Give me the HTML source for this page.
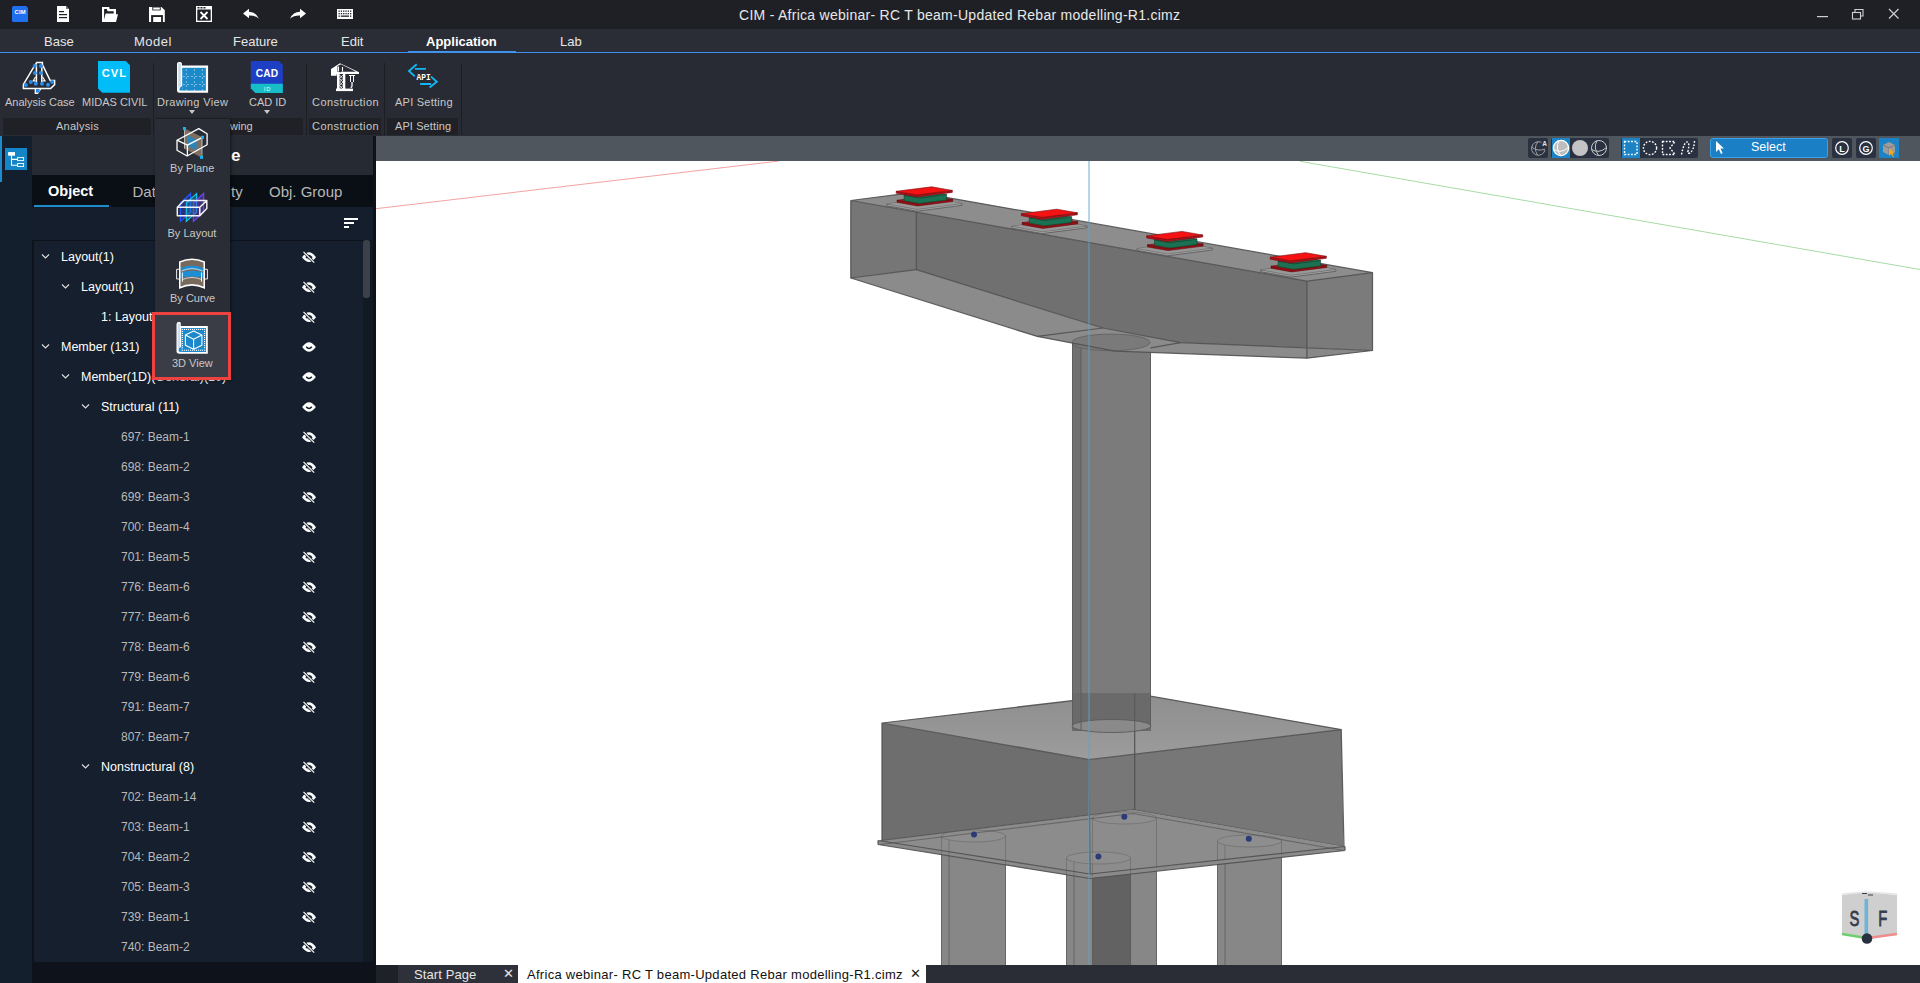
<!DOCTYPE html>
<html><head><meta charset="utf-8">
<style>
*{margin:0;padding:0;box-sizing:border-box}
html,body{width:1920px;height:983px;overflow:hidden;background:#1f2026;font-family:"Liberation Sans",sans-serif;color:#fff}
.a{position:absolute}
.t{position:absolute;white-space:nowrap;line-height:1}
#title{left:0;top:0;width:1920px;height:28px;background:#1f2026}
#menu{left:0;top:29px;width:1920px;height:23px;background:#2a2d35}
#menuline{left:0;top:52px;width:1920px;height:1px;background:#3f93ee}
#ribbon{left:0;top:53px;width:1920px;height:83px;background:#282b33}
.grp{position:absolute;top:65px;height:17px;background:#202228}
.rl{position:absolute;font-size:11.5px;color:#c9c9c9;white-space:nowrap;line-height:1;text-align:center}
#side{left:0;top:136px;width:32px;height:847px;background:#131f2d}
#panel{left:32px;top:136px;width:344px;height:847px;background:#0e131b}
#phead{left:32px;top:136px;width:341px;height:39px;background:#262a33}
#ptabs{left:32px;top:175px;width:341px;height:32px;background:#0a0e15}
#psort{left:32px;top:207px;width:341px;height:33px;background:#151e2c}
#plist{left:34px;top:241px;width:329px;height:721px;background:#151f2d}
.row{position:absolute;font-size:12.5px;line-height:1;white-space:nowrap}
#vp{left:376px;top:136px;width:1544px;height:829px;background:#fff}
#vtool{left:376px;top:136px;width:1544px;height:25px;background:#50565e}
#btabs{left:376px;top:965px;width:1544px;height:18px;background:#2a2d36}
</style></head><body>
<div id="title" class="a"></div>
<div id="menu" class="a"></div>
<div id="menuline" class="a"></div>
<div id="ribbon" class="a"></div>
<div id="side" class="a"></div>
<div id="panel" class="a"></div>
<div id="phead" class="a"></div>
<div id="ptabs" class="a"></div>
<div id="psort" class="a"></div>
<div id="plist" class="a"></div>
<div id="vp" class="a"></div>
<div id="vtool" class="a"></div>
<div id="btabs" class="a"></div>

<!-- title bar icons -->
<svg class="a" style="left:0;top:0" width="400" height="28" viewBox="0 0 400 28">
 <path d="M12 7.5 Q12 6 13.5 6 H26 L28 8 V22 H13.5 Q12 22 12 20.5Z" fill="#1f6fee"/>
 <text x="20.2" y="14" font-size="5.8" font-weight="700" fill="#fff" text-anchor="middle" font-family="Liberation Sans" letter-spacing="0.2">CIM</text>
 <path d="M57 6 H66 L69 9 V22 H57Z" fill="#fff"/>
 <path d="M66 6 V9 H69" fill="#1f2026" opacity="0.6"/>
 <rect x="59" y="11" width="5" height="1.2" fill="#1f2026"/><rect x="59" y="14" width="8" height="1.2" fill="#1f2026"/><rect x="59" y="17" width="8" height="1.2" fill="#1f2026"/>
 <path d="M102 7 H109.2 L109.6 9.1 H116 V14.3 H118 L116 22 H102 Z" fill="#fff"/>
 <path d="M104.1 9.1 H106.8 L107.6 11.2 H113.7 V13.6 H105.6 L104.1 19.7 Z" fill="#1f2026"/>
 <path d="M149 7 H161.5 L164.8 10.2 V22 H149 Z" fill="#fff"/>
 <rect x="152.3" y="7" width="8.4" height="3.4" fill="#1f2026"/><rect x="153.2" y="7.5" width="6.6" height="2.1" fill="#fff"/>
 <rect x="151.1" y="15.1" width="11.8" height="6.9" fill="#1f2026"/><rect x="153.2" y="17" width="7.9" height="5" fill="#fff"/>
 <rect x="196" y="6" width="16" height="16" fill="#fff"/>
 <rect x="197.3" y="9.5" width="13.4" height="11.2" fill="#1f2026"/>
 <rect x="197.5" y="7" width="2" height="1.5" fill="#1f2026"/><rect x="200.5" y="7" width="2" height="1.5" fill="#1f2026"/><rect x="203.5" y="7" width="2" height="1.5" fill="#1f2026"/>
 <path d="M200.5 12 L207.5 19 M207.5 12 L200.5 19" stroke="#fff" stroke-width="1.8"/>
 <path d="M243 13.5 L249 8.8 V11.8 Q256 11.8 259 18.8 Q255 15.2 249 15.5 V18.2Z" fill="#fff"/>
 <path d="M306 13.5 L300 8.8 V11.8 Q293 11.8 290 18.8 Q294 15.2 300 15.5 V18.2Z" fill="#fff"/>
 <rect x="337" y="9" width="16" height="10" fill="#fff"/>
 <g fill="#1f2026">
  <rect x="338.5" y="10.5" width="1.3" height="1.3"/><rect x="340.8" y="10.5" width="1.3" height="1.3"/><rect x="343.1" y="10.5" width="1.3" height="1.3"/><rect x="345.4" y="10.5" width="1.3" height="1.3"/><rect x="347.7" y="10.5" width="1.3" height="1.3"/><rect x="350" y="10.5" width="1.3" height="1.3"/>
  <rect x="338.5" y="13" width="1.3" height="1.3"/><rect x="340.8" y="13" width="1.3" height="1.3"/><rect x="343.1" y="13" width="1.3" height="1.3"/><rect x="345.4" y="13" width="1.3" height="1.3"/><rect x="347.7" y="13" width="1.3" height="1.3"/><rect x="350" y="13" width="1.3" height="1.3"/>
  <rect x="338.5" y="15.5" width="1.3" height="1.3"/><rect x="340.8" y="15.5" width="8.2" height="1.3"/><rect x="350" y="15.5" width="1.3" height="1.3"/>
 </g>
</svg>
<div class="t" style="left:739px;top:8px;font-size:14px;letter-spacing:0.27px;color:#e8e8e8">CIM - Africa webinar- RC T beam-Updated Rebar modelling-R1.cimz</div>
<svg class="a" style="left:1800px;top:0" width="120" height="28" viewBox="1800 0 120 28">
 <rect x="1817" y="16" width="11" height="1.2" fill="#cfcfcf"/>
 <rect x="1852.5" y="12.5" width="8" height="6.5" fill="none" stroke="#cfcfcf" stroke-width="1.1"/>
 <path d="M1855 12.5 V9.5 H1863 V16 H1860.5" fill="none" stroke="#cfcfcf" stroke-width="1.1"/>
 <path d="M1889 9 L1898.5 18.5 M1898.5 9 L1889 18.5" stroke="#cfcfcf" stroke-width="1.2"/>
</svg>

<!-- ribbon -->
<div class="a" style="left:153px;top:63px;width:1px;height:72px;background:#1c1e23"></div>
<div class="a" style="left:306px;top:63px;width:1px;height:72px;background:#1c1e23"></div>
<div class="a" style="left:384px;top:63px;width:1px;height:72px;background:#1c1e23"></div>
<div class="a" style="left:461px;top:63px;width:1px;height:72px;background:#1c1e23"></div>
<div class="a" style="left:3px;top:118px;width:148px;height:16.5px;background:#1f2126"></div>
<div class="a" style="left:155px;top:118px;width:148px;height:16.5px;background:#1f2126"></div>
<div class="a" style="left:309px;top:118px;width:72px;height:16.5px;background:#1f2126"></div>
<div class="a" style="left:387px;top:118px;width:71px;height:16.5px;background:#1f2126"></div>
<div class="t" style="left:5px;top:97px;font-size:11px;color:#c8c8c8">Analysis Case</div>
<div class="t" style="left:82px;top:97px;font-size:11px;color:#c8c8c8">MIDAS CIVIL</div>
<div class="t" style="left:157px;top:97px;font-size:11px;letter-spacing:0.35px;color:#c8c8c8">Drawing View</div>
<div class="t" style="left:249px;top:97px;font-size:11px;color:#c8c8c8">CAD ID</div>
<div class="t" style="left:312px;top:97px;font-size:11px;letter-spacing:0.45px;color:#c8c8c8">Construction</div>
<div class="t" style="left:395px;top:97px;font-size:11px;letter-spacing:0.25px;color:#c8c8c8">API Setting</div>
<div class="t" style="left:56px;top:120.7px;font-size:11px;letter-spacing:0.25px;color:#c8c8c8">Analysis</div>
<div class="t" style="left:230px;top:120.7px;font-size:11px;color:#c8c8c8">wing</div>
<div class="t" style="left:312px;top:120.7px;font-size:11px;letter-spacing:0.45px;color:#c8c8c8">Construction</div>
<div class="t" style="left:395px;top:120.7px;font-size:11px;letter-spacing:0.1px;color:#c8c8c8">API Setting</div>
<svg class="a" style="left:0;top:53px" width="470" height="65" viewBox="0 53 470 65">
 <!-- analysis case -->
 <g fill="none" stroke="#fff" stroke-width="1.5" stroke-linejoin="miter">
  <path d="M36.8 62.6 H42.4 V64.5 L50.2 80.6 H54.6 V84.6 L50.6 88.6 H23.4 V84.4 L35.2 64.6 Z"/>
  <path d="M36.4 64.5 V84.5 M41.8 64.5 V84.5"/>
  <path d="M35.5 77 L33.2 80.8 H35.5 M42.6 77 L45 80.8 H42.6" stroke-width="1.2"/>
  <path d="M35.4 88.8 V93.2 H37.6 L40.6 88.8"/>
 </g>
 <g fill="#2b8de8">
  <circle cx="34.7" cy="66" r="2"/><circle cx="40.9" cy="66" r="2"/><circle cx="34.9" cy="72.9" r="2"/><circle cx="40.9" cy="72.9" r="2"/>
  <circle cx="30.8" cy="82" r="2"/><circle cx="25.8" cy="85" r="2"/><circle cx="35.8" cy="83.8" r="2"/><circle cx="42" cy="83.8" r="2"/><circle cx="48" cy="84.8" r="2"/><circle cx="52.1" cy="82" r="2"/>
  <circle cx="37.9" cy="90.7" r="2"/>
 </g>
 <!-- CVL -->
 <path d="M98 61 H125.7 L130 65.3 V92.8 H102.3 L98 88.5Z" fill="#00bdf7"/>
 <text x="114.4" y="76.8" font-size="11.2" font-weight="700" fill="#fff" text-anchor="middle" font-family="Liberation Sans" letter-spacing="0.9">CVL</text>
 <!-- drawing view -->
 <path d="M179 62 Q177 62 177 64 V90.5 Q177 92.8 179.5 92.8 H208.1 V65.6 H181.9 V63.5 Q181.9 62 180 62Z" fill="#fff"/>
 <rect x="182.2" y="67.8" width="23.7" height="22.8" fill="#1b8acb"/>
 <path d="M178.2 63.5 H180.8 V85.5 Q179.5 87 178.2 88Z" fill="#cfdbe8"/>
 <path d="M182.2 86 Q179 87 179.5 90.6 H182.2Z" fill="#1b8acb"/>
 <g fill="#fff"><circle cx="186.3" cy="70.0" r="0.6"/><circle cx="186.3" cy="74.0" r="0.6"/><circle cx="186.3" cy="78.0" r="0.6"/><circle cx="186.3" cy="82.0" r="0.6"/><circle cx="186.3" cy="86.0" r="0.6"/><circle cx="186.3" cy="90.0" r="0.6"/><circle cx="194.4" cy="70.0" r="0.6"/><circle cx="194.4" cy="74.0" r="0.6"/><circle cx="194.4" cy="78.0" r="0.6"/><circle cx="194.4" cy="82.0" r="0.6"/><circle cx="194.4" cy="86.0" r="0.6"/><circle cx="194.4" cy="90.0" r="0.6"/><circle cx="202.4" cy="70.0" r="0.6"/><circle cx="202.4" cy="74.0" r="0.6"/><circle cx="202.4" cy="78.0" r="0.6"/><circle cx="202.4" cy="82.0" r="0.6"/><circle cx="202.4" cy="86.0" r="0.6"/><circle cx="202.4" cy="90.0" r="0.6"/><circle cx="184.0" cy="76.5" r="0.6"/><circle cx="188.0" cy="76.5" r="0.6"/><circle cx="192.0" cy="76.5" r="0.6"/><circle cx="196.0" cy="76.5" r="0.6"/><circle cx="200.0" cy="76.5" r="0.6"/><circle cx="204.0" cy="76.5" r="0.6"/><circle cx="184.0" cy="84.5" r="0.6"/><circle cx="188.0" cy="84.5" r="0.6"/><circle cx="192.0" cy="84.5" r="0.6"/><circle cx="196.0" cy="84.5" r="0.6"/><circle cx="200.0" cy="84.5" r="0.6"/><circle cx="204.0" cy="84.5" r="0.6"/></g>
 <path d="M189 110 H195 L192 114Z" fill="#c8c8c8"/>
 <!-- CAD ID -->
 <path d="M250.8 61.1 H279 L282.8 65.3 V93.1 H255.3 L250.8 88.3Z" fill="#1d3fc4"/>
 <path d="M250.8 83.8 H282.8 V93.1 H255.3 L250.8 88.3Z" fill="#16bec8"/>
 <text x="267" y="76.6" font-size="10.2" font-weight="700" fill="#fff" text-anchor="middle" font-family="Liberation Sans" letter-spacing="0.2">CAD</text>
 <text x="267.6" y="90.7" font-size="5.8" fill="#e6f7f8" text-anchor="middle" font-family="Liberation Sans" letter-spacing="1">ID</text>
 <path d="M264 110 H270 L267 114Z" fill="#c8c8c8"/>
 <!-- construction crane -->
 <path d="M331 69 L340 63.2 L359 72.2 V74 H336.7 V75.8 H331Z" fill="#fff"/>
 <path d="M337.5 66 L341 64.2 L356 71.8 H341 V72.2 H337.5Z" fill="#282b33"/>
 <path d="M338.5 66.5 V71.5 M342.5 67 V71.5" stroke="#fff" stroke-width="1.1"/>
 <rect x="337" y="72" width="2.6" height="17.5" fill="#fff"/>
 <rect x="343" y="72" width="2.3" height="17.5" fill="#fff"/>
 <path d="M339.6 75 L343 78.5 L339.6 82 L343 85.5 L339.6 89 M343 75 L339.6 78.5 L343 82 L339.6 85.5 L343 89" stroke="#fff" stroke-width="0.8" fill="none"/>
 <rect x="336" y="88.6" width="17" height="2.5" fill="#fff"/>
 <path d="M349 75.5 H355 M350.5 75.5 V82 M353.5 75.5 V82" stroke="#fff" stroke-width="1" fill="none"/>
 <path d="M352 82 V85.8 Q352 87.8 350.6 87" stroke="#fff" stroke-width="1.3" fill="none"/>
 <!-- API -->
 <g stroke="#12b6f4" stroke-width="1.9" fill="none" stroke-linejoin="miter" stroke-linecap="butt">
  <path d="M416.7 64.3 L409 71 L414.8 76.4 M415 68.9 H426"/>
  <path d="M431 76.6 L436.8 81.8 L429.6 87.6 M420.1 84 H431"/>
 </g>
 <text x="423.6" y="80" font-size="9.2" fill="#fff" text-anchor="middle" font-family="Liberation Mono" font-weight="700" transform="translate(423.6 80) scale(0.85 1) translate(-423.6 -80)">API</text>
 </svg>


<!-- panel -->
<div class="a" style="left:0;top:136px;width:2px;height:46px;background:#1e8ccc"></div>
<div class="a" style="left:5px;top:148px;width:22px;height:22px;background:#1486c8"></div>
<svg class="a" style="left:5px;top:148px" width="22" height="22" viewBox="0 0 22 22">
 <rect x="3.1" y="4.1" width="6.9" height="3.6" fill="#fff"/>
 <path d="M6.5 7.5 V17.3 H12.6 M6.5 11.4 H12.6" stroke="#fff" stroke-width="1.1" fill="none"/>
 <rect x="12.6" y="9.6" width="6" height="3" fill="none" stroke="#fff" stroke-width="0.9"/>
 <rect x="12.6" y="15.5" width="6" height="3" fill="none" stroke="#fff" stroke-width="0.9"/>
</svg>
<div class="t" style="left:231px;top:147px;font-size:17px;font-weight:700;color:#fff">e</div>
<div class="t" style="left:48px;top:184px;font-size:14.5px;font-weight:700;color:#fff">Object</div>
<div class="a" style="left:34px;top:205px;width:75px;height:2px;background:#1e8ccc"></div>
<div class="t" style="left:132.5px;top:184px;font-size:15px;color:#b8b8b8">Dat</div>
<div class="t" style="left:231px;top:184px;font-size:15px;color:#b8b8b8">ty</div>
<div class="t" style="left:269px;top:184px;font-size:15px;color:#b8b8b8">Obj. Group</div>
<div class="a" style="left:344px;top:218px;width:14px;height:2px;background:#fff"></div>
<div class="a" style="left:344px;top:222px;width:10px;height:2px;background:#fff"></div>
<div class="a" style="left:344px;top:226px;width:5px;height:2px;background:#fff"></div>
<div class="a" style="left:363px;top:240px;width:10px;height:722px;background:#111923"></div>
<div class="a" style="left:363px;top:240px;width:7px;height:58px;background:#3c4149;border-radius:3px"></div>
<div class="t" style="left:61px;top:251px;font-size:12.5px;color:#fff">Layout(1)</div>
<div class="t" style="left:81px;top:281px;font-size:12.5px;color:#fff">Layout(1)</div>
<div class="t" style="left:101px;top:311px;font-size:12.5px;color:#fff">1: Layout</div>
<div class="t" style="left:61px;top:341px;font-size:12.5px;color:#fff">Member (131)</div>
<div class="t" style="left:81px;top:371px;font-size:12.5px;color:#fff">Member(1D)(General)(10)</div>
<div class="t" style="left:101px;top:401px;font-size:12.5px;color:#fff">Structural (11)</div>
<div class="t" style="left:121px;top:431px;font-size:12px;color:#b9b9b9">697: Beam-1</div>
<div class="t" style="left:121px;top:461px;font-size:12px;color:#b9b9b9">698: Beam-2</div>
<div class="t" style="left:121px;top:491px;font-size:12px;color:#b9b9b9">699: Beam-3</div>
<div class="t" style="left:121px;top:521px;font-size:12px;color:#b9b9b9">700: Beam-4</div>
<div class="t" style="left:121px;top:551px;font-size:12px;color:#b9b9b9">701: Beam-5</div>
<div class="t" style="left:121px;top:581px;font-size:12px;color:#b9b9b9">776: Beam-6</div>
<div class="t" style="left:121px;top:611px;font-size:12px;color:#b9b9b9">777: Beam-6</div>
<div class="t" style="left:121px;top:641px;font-size:12px;color:#b9b9b9">778: Beam-6</div>
<div class="t" style="left:121px;top:671px;font-size:12px;color:#b9b9b9">779: Beam-6</div>
<div class="t" style="left:121px;top:701px;font-size:12px;color:#b9b9b9">791: Beam-7</div>
<div class="t" style="left:121px;top:731px;font-size:12px;color:#b9b9b9">807: Beam-7</div>
<div class="t" style="left:101px;top:761px;font-size:12.5px;color:#fff">Nonstructural (8)</div>
<div class="t" style="left:121px;top:791px;font-size:12px;color:#b9b9b9">702: Beam-14</div>
<div class="t" style="left:121px;top:821px;font-size:12px;color:#b9b9b9">703: Beam-1</div>
<div class="t" style="left:121px;top:851px;font-size:12px;color:#b9b9b9">704: Beam-2</div>
<div class="t" style="left:121px;top:881px;font-size:12px;color:#b9b9b9">705: Beam-3</div>
<div class="t" style="left:121px;top:911px;font-size:12px;color:#b9b9b9">739: Beam-1</div>
<div class="t" style="left:121px;top:941px;font-size:12px;color:#b9b9b9">740: Beam-2</div>
<svg class="a" style="left:0;top:0" width="376" height="983" viewBox="0 0 376 983">
<defs>
 <g id="eyev"><path d="M-6.8 0 Q0 -9.5 6.8 0 Q0 9.5 -6.8 0Z" fill="#fff"/><path d="M-2.8 -0.3 Q0 3.2 2.8 -0.3" stroke="#151f2d" stroke-width="1.4" fill="none"/></g>
 <g id="eyeh"><path d="M-7 0.3 Q0 -9.8 7 0.3 Q0 9.8 -7 0.3Z" fill="#fff"/><path d="M-3.6 0.2 Q0 -4.8 3.6 0.2 Q0 4.8 -3.6 0.2Z" fill="#151f2d"/><path d="M-1.8 1 Q0 3 1.8 1" stroke="#fff" stroke-width="1" fill="none"/><path d="M-5.5 -5.2 L5.2 5.6" stroke="#151f2d" stroke-width="2.6"/><path d="M-5.5 -5.2 L5.2 5.6" stroke="#fff" stroke-width="1.2"/></g>
</defs>
<path d="M42.0 254.5 L45.5 258 L49.0 254.5" stroke="#e0e0e0" stroke-width="1.1" fill="none"/>
<g transform="translate(309 257)"><path d="M-7 0.3 Q0 -9.8 7 0.3 Q0 9.8 -7 0.3Z" fill="#fff"/><path d="M-3.6 0.2 Q0 -4.8 3.6 0.2 Q0 4.8 -3.6 0.2Z" fill="#151f2d"/><path d="M-1.8 1 Q0 3 1.8 1" stroke="#fff" stroke-width="1" fill="none"/><path d="M-5.5 -5.2 L5.2 5.6" stroke="#151f2d" stroke-width="2.6"/><path d="M-5.5 -5.2 L5.2 5.6" stroke="#fff" stroke-width="1.2"/></g>
<path d="M62.0 284.5 L65.5 288 L69.0 284.5" stroke="#e0e0e0" stroke-width="1.1" fill="none"/>
<g transform="translate(309 287)"><path d="M-7 0.3 Q0 -9.8 7 0.3 Q0 9.8 -7 0.3Z" fill="#fff"/><path d="M-3.6 0.2 Q0 -4.8 3.6 0.2 Q0 4.8 -3.6 0.2Z" fill="#151f2d"/><path d="M-1.8 1 Q0 3 1.8 1" stroke="#fff" stroke-width="1" fill="none"/><path d="M-5.5 -5.2 L5.2 5.6" stroke="#151f2d" stroke-width="2.6"/><path d="M-5.5 -5.2 L5.2 5.6" stroke="#fff" stroke-width="1.2"/></g>
<g transform="translate(309 317)"><path d="M-7 0.3 Q0 -9.8 7 0.3 Q0 9.8 -7 0.3Z" fill="#fff"/><path d="M-3.6 0.2 Q0 -4.8 3.6 0.2 Q0 4.8 -3.6 0.2Z" fill="#151f2d"/><path d="M-1.8 1 Q0 3 1.8 1" stroke="#fff" stroke-width="1" fill="none"/><path d="M-5.5 -5.2 L5.2 5.6" stroke="#151f2d" stroke-width="2.6"/><path d="M-5.5 -5.2 L5.2 5.6" stroke="#fff" stroke-width="1.2"/></g>
<path d="M42.0 344.5 L45.5 348 L49.0 344.5" stroke="#e0e0e0" stroke-width="1.1" fill="none"/>
<g transform="translate(309 347)"><path d="M-6.8 0 Q0 -9.5 6.8 0 Q0 9.5 -6.8 0Z" fill="#fff"/><path d="M-2.8 -0.3 Q0 3.2 2.8 -0.3" stroke="#151f2d" stroke-width="1.4" fill="none"/></g>
<path d="M62.0 374.5 L65.5 378 L69.0 374.5" stroke="#e0e0e0" stroke-width="1.1" fill="none"/>
<g transform="translate(309 377)"><path d="M-6.8 0 Q0 -9.5 6.8 0 Q0 9.5 -6.8 0Z" fill="#fff"/><path d="M-2.8 -0.3 Q0 3.2 2.8 -0.3" stroke="#151f2d" stroke-width="1.4" fill="none"/></g>
<path d="M82.0 404.5 L85.5 408 L89.0 404.5" stroke="#e0e0e0" stroke-width="1.1" fill="none"/>
<g transform="translate(309 407)"><path d="M-6.8 0 Q0 -9.5 6.8 0 Q0 9.5 -6.8 0Z" fill="#fff"/><path d="M-2.8 -0.3 Q0 3.2 2.8 -0.3" stroke="#151f2d" stroke-width="1.4" fill="none"/></g>
<g transform="translate(309 437)"><path d="M-7 0.3 Q0 -9.8 7 0.3 Q0 9.8 -7 0.3Z" fill="#fff"/><path d="M-3.6 0.2 Q0 -4.8 3.6 0.2 Q0 4.8 -3.6 0.2Z" fill="#151f2d"/><path d="M-1.8 1 Q0 3 1.8 1" stroke="#fff" stroke-width="1" fill="none"/><path d="M-5.5 -5.2 L5.2 5.6" stroke="#151f2d" stroke-width="2.6"/><path d="M-5.5 -5.2 L5.2 5.6" stroke="#fff" stroke-width="1.2"/></g>
<g transform="translate(309 467)"><path d="M-7 0.3 Q0 -9.8 7 0.3 Q0 9.8 -7 0.3Z" fill="#fff"/><path d="M-3.6 0.2 Q0 -4.8 3.6 0.2 Q0 4.8 -3.6 0.2Z" fill="#151f2d"/><path d="M-1.8 1 Q0 3 1.8 1" stroke="#fff" stroke-width="1" fill="none"/><path d="M-5.5 -5.2 L5.2 5.6" stroke="#151f2d" stroke-width="2.6"/><path d="M-5.5 -5.2 L5.2 5.6" stroke="#fff" stroke-width="1.2"/></g>
<g transform="translate(309 497)"><path d="M-7 0.3 Q0 -9.8 7 0.3 Q0 9.8 -7 0.3Z" fill="#fff"/><path d="M-3.6 0.2 Q0 -4.8 3.6 0.2 Q0 4.8 -3.6 0.2Z" fill="#151f2d"/><path d="M-1.8 1 Q0 3 1.8 1" stroke="#fff" stroke-width="1" fill="none"/><path d="M-5.5 -5.2 L5.2 5.6" stroke="#151f2d" stroke-width="2.6"/><path d="M-5.5 -5.2 L5.2 5.6" stroke="#fff" stroke-width="1.2"/></g>
<g transform="translate(309 527)"><path d="M-7 0.3 Q0 -9.8 7 0.3 Q0 9.8 -7 0.3Z" fill="#fff"/><path d="M-3.6 0.2 Q0 -4.8 3.6 0.2 Q0 4.8 -3.6 0.2Z" fill="#151f2d"/><path d="M-1.8 1 Q0 3 1.8 1" stroke="#fff" stroke-width="1" fill="none"/><path d="M-5.5 -5.2 L5.2 5.6" stroke="#151f2d" stroke-width="2.6"/><path d="M-5.5 -5.2 L5.2 5.6" stroke="#fff" stroke-width="1.2"/></g>
<g transform="translate(309 557)"><path d="M-7 0.3 Q0 -9.8 7 0.3 Q0 9.8 -7 0.3Z" fill="#fff"/><path d="M-3.6 0.2 Q0 -4.8 3.6 0.2 Q0 4.8 -3.6 0.2Z" fill="#151f2d"/><path d="M-1.8 1 Q0 3 1.8 1" stroke="#fff" stroke-width="1" fill="none"/><path d="M-5.5 -5.2 L5.2 5.6" stroke="#151f2d" stroke-width="2.6"/><path d="M-5.5 -5.2 L5.2 5.6" stroke="#fff" stroke-width="1.2"/></g>
<g transform="translate(309 587)"><path d="M-7 0.3 Q0 -9.8 7 0.3 Q0 9.8 -7 0.3Z" fill="#fff"/><path d="M-3.6 0.2 Q0 -4.8 3.6 0.2 Q0 4.8 -3.6 0.2Z" fill="#151f2d"/><path d="M-1.8 1 Q0 3 1.8 1" stroke="#fff" stroke-width="1" fill="none"/><path d="M-5.5 -5.2 L5.2 5.6" stroke="#151f2d" stroke-width="2.6"/><path d="M-5.5 -5.2 L5.2 5.6" stroke="#fff" stroke-width="1.2"/></g>
<g transform="translate(309 617)"><path d="M-7 0.3 Q0 -9.8 7 0.3 Q0 9.8 -7 0.3Z" fill="#fff"/><path d="M-3.6 0.2 Q0 -4.8 3.6 0.2 Q0 4.8 -3.6 0.2Z" fill="#151f2d"/><path d="M-1.8 1 Q0 3 1.8 1" stroke="#fff" stroke-width="1" fill="none"/><path d="M-5.5 -5.2 L5.2 5.6" stroke="#151f2d" stroke-width="2.6"/><path d="M-5.5 -5.2 L5.2 5.6" stroke="#fff" stroke-width="1.2"/></g>
<g transform="translate(309 647)"><path d="M-7 0.3 Q0 -9.8 7 0.3 Q0 9.8 -7 0.3Z" fill="#fff"/><path d="M-3.6 0.2 Q0 -4.8 3.6 0.2 Q0 4.8 -3.6 0.2Z" fill="#151f2d"/><path d="M-1.8 1 Q0 3 1.8 1" stroke="#fff" stroke-width="1" fill="none"/><path d="M-5.5 -5.2 L5.2 5.6" stroke="#151f2d" stroke-width="2.6"/><path d="M-5.5 -5.2 L5.2 5.6" stroke="#fff" stroke-width="1.2"/></g>
<g transform="translate(309 677)"><path d="M-7 0.3 Q0 -9.8 7 0.3 Q0 9.8 -7 0.3Z" fill="#fff"/><path d="M-3.6 0.2 Q0 -4.8 3.6 0.2 Q0 4.8 -3.6 0.2Z" fill="#151f2d"/><path d="M-1.8 1 Q0 3 1.8 1" stroke="#fff" stroke-width="1" fill="none"/><path d="M-5.5 -5.2 L5.2 5.6" stroke="#151f2d" stroke-width="2.6"/><path d="M-5.5 -5.2 L5.2 5.6" stroke="#fff" stroke-width="1.2"/></g>
<g transform="translate(309 707)"><path d="M-7 0.3 Q0 -9.8 7 0.3 Q0 9.8 -7 0.3Z" fill="#fff"/><path d="M-3.6 0.2 Q0 -4.8 3.6 0.2 Q0 4.8 -3.6 0.2Z" fill="#151f2d"/><path d="M-1.8 1 Q0 3 1.8 1" stroke="#fff" stroke-width="1" fill="none"/><path d="M-5.5 -5.2 L5.2 5.6" stroke="#151f2d" stroke-width="2.6"/><path d="M-5.5 -5.2 L5.2 5.6" stroke="#fff" stroke-width="1.2"/></g>
<path d="M82.0 764.5 L85.5 768 L89.0 764.5" stroke="#e0e0e0" stroke-width="1.1" fill="none"/>
<g transform="translate(309 767)"><path d="M-7 0.3 Q0 -9.8 7 0.3 Q0 9.8 -7 0.3Z" fill="#fff"/><path d="M-3.6 0.2 Q0 -4.8 3.6 0.2 Q0 4.8 -3.6 0.2Z" fill="#151f2d"/><path d="M-1.8 1 Q0 3 1.8 1" stroke="#fff" stroke-width="1" fill="none"/><path d="M-5.5 -5.2 L5.2 5.6" stroke="#151f2d" stroke-width="2.6"/><path d="M-5.5 -5.2 L5.2 5.6" stroke="#fff" stroke-width="1.2"/></g>
<g transform="translate(309 797)"><path d="M-7 0.3 Q0 -9.8 7 0.3 Q0 9.8 -7 0.3Z" fill="#fff"/><path d="M-3.6 0.2 Q0 -4.8 3.6 0.2 Q0 4.8 -3.6 0.2Z" fill="#151f2d"/><path d="M-1.8 1 Q0 3 1.8 1" stroke="#fff" stroke-width="1" fill="none"/><path d="M-5.5 -5.2 L5.2 5.6" stroke="#151f2d" stroke-width="2.6"/><path d="M-5.5 -5.2 L5.2 5.6" stroke="#fff" stroke-width="1.2"/></g>
<g transform="translate(309 827)"><path d="M-7 0.3 Q0 -9.8 7 0.3 Q0 9.8 -7 0.3Z" fill="#fff"/><path d="M-3.6 0.2 Q0 -4.8 3.6 0.2 Q0 4.8 -3.6 0.2Z" fill="#151f2d"/><path d="M-1.8 1 Q0 3 1.8 1" stroke="#fff" stroke-width="1" fill="none"/><path d="M-5.5 -5.2 L5.2 5.6" stroke="#151f2d" stroke-width="2.6"/><path d="M-5.5 -5.2 L5.2 5.6" stroke="#fff" stroke-width="1.2"/></g>
<g transform="translate(309 857)"><path d="M-7 0.3 Q0 -9.8 7 0.3 Q0 9.8 -7 0.3Z" fill="#fff"/><path d="M-3.6 0.2 Q0 -4.8 3.6 0.2 Q0 4.8 -3.6 0.2Z" fill="#151f2d"/><path d="M-1.8 1 Q0 3 1.8 1" stroke="#fff" stroke-width="1" fill="none"/><path d="M-5.5 -5.2 L5.2 5.6" stroke="#151f2d" stroke-width="2.6"/><path d="M-5.5 -5.2 L5.2 5.6" stroke="#fff" stroke-width="1.2"/></g>
<g transform="translate(309 887)"><path d="M-7 0.3 Q0 -9.8 7 0.3 Q0 9.8 -7 0.3Z" fill="#fff"/><path d="M-3.6 0.2 Q0 -4.8 3.6 0.2 Q0 4.8 -3.6 0.2Z" fill="#151f2d"/><path d="M-1.8 1 Q0 3 1.8 1" stroke="#fff" stroke-width="1" fill="none"/><path d="M-5.5 -5.2 L5.2 5.6" stroke="#151f2d" stroke-width="2.6"/><path d="M-5.5 -5.2 L5.2 5.6" stroke="#fff" stroke-width="1.2"/></g>
<g transform="translate(309 917)"><path d="M-7 0.3 Q0 -9.8 7 0.3 Q0 9.8 -7 0.3Z" fill="#fff"/><path d="M-3.6 0.2 Q0 -4.8 3.6 0.2 Q0 4.8 -3.6 0.2Z" fill="#151f2d"/><path d="M-1.8 1 Q0 3 1.8 1" stroke="#fff" stroke-width="1" fill="none"/><path d="M-5.5 -5.2 L5.2 5.6" stroke="#151f2d" stroke-width="2.6"/><path d="M-5.5 -5.2 L5.2 5.6" stroke="#fff" stroke-width="1.2"/></g>
<g transform="translate(309 947)"><path d="M-7 0.3 Q0 -9.8 7 0.3 Q0 9.8 -7 0.3Z" fill="#fff"/><path d="M-3.6 0.2 Q0 -4.8 3.6 0.2 Q0 4.8 -3.6 0.2Z" fill="#151f2d"/><path d="M-1.8 1 Q0 3 1.8 1" stroke="#fff" stroke-width="1" fill="none"/><path d="M-5.5 -5.2 L5.2 5.6" stroke="#151f2d" stroke-width="2.6"/><path d="M-5.5 -5.2 L5.2 5.6" stroke="#fff" stroke-width="1.2"/></g></svg>

<!-- dropdown -->
<div class="a" style="left:155px;top:119px;width:75px;height:260px;background:#2a2d36;box-shadow:1px 1px 3px rgba(0,0,0,0.5)"></div>
<div class="a" style="left:152px;top:312px;width:79px;height:68px;background:#3a3d46;border:3px solid #ee4240"></div>
<div class="t" style="left:170px;top:163px;font-size:11px;letter-spacing:0.05px;color:#c8c8c8">By Plane</div>
<div class="t" style="left:167.5px;top:228px;font-size:11px;color:#c8c8c8">By Layout</div>
<div class="t" style="left:170px;top:293px;font-size:11px;color:#c8c8c8">By Curve</div>
<div class="t" style="left:172px;top:358px;font-size:11px;color:#c8c8c8">3D View</div>
<svg class="a" style="left:155px;top:119px" width="75" height="260" viewBox="155 119 75 260">
 <!-- by plane -->
 <path d="M184.5 128.4 L202.5 137.3 L201.5 157.4 L184.5 148.7Z" fill="#7d6e60"/>
 <path d="M188 135.6 L196.6 139.8 V150.6 L188 146Z" fill="#2a86b8"/>
 <g fill="none" stroke="#fff" stroke-width="1.3" stroke-linejoin="round">
  <path d="M177 140.2 L198.8 128.6 L207.1 133.8 V144.8 L187.1 156 L177 150.3Z"/>
  <path d="M177 140.2 L187.4 145.2 V156 M187.4 145.2 L202.5 137.3"/>
 </g>
 <path d="M184.5 128.4 V148.7 M202 137.3 V157" stroke="#fff" stroke-width="0.7" opacity="0.85"/>
 <g fill="#10b4f0"><rect x="183" y="127" width="3" height="3"/><rect x="201" y="135.8" width="3" height="3"/><rect x="200" y="155.9" width="3" height="3"/></g>
 <!-- by layout -->
 <path d="M180.4 203 L190.6 193.5 V212 L180.4 221.4Z" fill="#2a3cc0" fill-opacity="0.45" stroke="#1f58ff" stroke-width="1.2"/>
 <path d="M186.3 203 L196.6 193.5 V212 L186.3 221.4Z" fill="#1a90b8" fill-opacity="0.4" stroke="#12c0ee" stroke-width="1.2"/>
 <path d="M193.4 203 L203.6 193.5 V212 L193.4 221.4Z" fill="#5a38c8" fill-opacity="0.45" stroke="#6a45ff" stroke-width="1.2"/>
 <g fill="none" stroke="#fff" stroke-width="1.5" stroke-linejoin="round" stroke-opacity="0.92">
  <path d="M177.3 207.3 L184 200.5 H206.8 V208.6 L199.8 215.8 H177.3Z M177.3 207.3 H199.8 L206.8 200.5 M199.8 207.3 V215.8"/>
 </g>
 <!-- by curve -->
 <path d="M180.5 262.5 Q192 257 203.5 262.5 V287 Q192 281.5 180.5 287Z" fill="#776a5c"/>
 <path d="M181 268 Q192 263 203 268 V271.5 Q192 266.5 181 271.5Z" fill="#1c8fd4"/>
 <path d="M179.5 273 Q192 268.5 205 273 V278.8 Q192 274 179.5 278.8Z" fill="#1c8fd4"/>
 <g fill="none" stroke="#fff">
  <path d="M179.8 287.8 V262 Q192 256.6 204.2 262 V287.8 Q192 282 179.8 287.8Z" stroke-width="1.6"/>
  <path d="M181.5 271 Q192 266.2 202.5 271 M182.5 279.5 Q192 275.5 201.5 279.5" stroke-width="0.8" stroke-opacity="0.85"/>
  <path d="M182.4 272.5 V281.7 M201.5 272.5 V281.7" stroke-width="0.9"/>
  <path d="M179.4 269.3 H176.6 V279 H179.4 M204.6 269.3 H207.4 V279 H204.6" stroke-width="1" stroke-opacity="0.9"/>
 </g>
 <!-- 3d view -->
 <path d="M178.5 322.1 Q176.5 322.1 176.5 325 V351 Q176.5 353.8 179.5 353.8 H207.8 V325.9 H180.75 V323.5 Q180.75 322.1 179.5 322.1Z" fill="#fff"/>
 <path d="M177.6 323.5 H180 V347.5 Q178.5 348.5 177.6 349.5Z" fill="#cddff0"/>
 <rect x="181.2" y="328" width="24.8" height="24" fill="#1b88cc"/>
 <path d="M181.2 347 Q178.3 347.5 178.7 351.3 Q179 352 181.2 352Z" fill="#1b88cc"/>
 <g fill="#fff"><rect x="181.85" y="328.9" width="1.1" height="1.1"/><rect x="181.85" y="349.7" width="1.1" height="1.1"/><rect x="183.87" y="328.9" width="1.1" height="1.1"/><rect x="183.87" y="349.7" width="1.1" height="1.1"/><rect x="185.89" y="328.9" width="1.1" height="1.1"/><rect x="185.89" y="349.7" width="1.1" height="1.1"/><rect x="187.91" y="328.9" width="1.1" height="1.1"/><rect x="187.91" y="349.7" width="1.1" height="1.1"/><rect x="189.93" y="328.9" width="1.1" height="1.1"/><rect x="189.93" y="349.7" width="1.1" height="1.1"/><rect x="191.95" y="328.9" width="1.1" height="1.1"/><rect x="191.95" y="349.7" width="1.1" height="1.1"/><rect x="193.97" y="328.9" width="1.1" height="1.1"/><rect x="193.97" y="349.7" width="1.1" height="1.1"/><rect x="195.99" y="328.9" width="1.1" height="1.1"/><rect x="195.99" y="349.7" width="1.1" height="1.1"/><rect x="198.01" y="328.9" width="1.1" height="1.1"/><rect x="198.01" y="349.7" width="1.1" height="1.1"/><rect x="200.03" y="328.9" width="1.1" height="1.1"/><rect x="200.03" y="349.7" width="1.1" height="1.1"/><rect x="202.05" y="328.9" width="1.1" height="1.1"/><rect x="202.05" y="349.7" width="1.1" height="1.1"/><rect x="204.07" y="328.9" width="1.1" height="1.1"/><rect x="204.07" y="349.7" width="1.1" height="1.1"/><rect x="181.85" y="330.88" width="1.1" height="1.1"/><rect x="204.05" y="330.88" width="1.1" height="1.1"/><rect x="181.85" y="332.91" width="1.1" height="1.1"/><rect x="204.05" y="332.91" width="1.1" height="1.1"/><rect x="181.85" y="334.94" width="1.1" height="1.1"/><rect x="204.05" y="334.94" width="1.1" height="1.1"/><rect x="181.85" y="336.97" width="1.1" height="1.1"/><rect x="204.05" y="336.97" width="1.1" height="1.1"/><rect x="181.85" y="339.00" width="1.1" height="1.1"/><rect x="204.05" y="339.00" width="1.1" height="1.1"/><rect x="181.85" y="341.03" width="1.1" height="1.1"/><rect x="204.05" y="341.03" width="1.1" height="1.1"/><rect x="181.85" y="343.06" width="1.1" height="1.1"/><rect x="204.05" y="343.06" width="1.1" height="1.1"/><rect x="181.85" y="345.09" width="1.1" height="1.1"/><rect x="204.05" y="345.09" width="1.1" height="1.1"/><rect x="181.85" y="347.12" width="1.1" height="1.1"/><rect x="204.05" y="347.12" width="1.1" height="1.1"/></g>
 <g fill="none" stroke="#fff" stroke-width="1.1" stroke-linejoin="round">
  <path d="M193.6 331 L201.9 335.1 V345.3 L193.6 349.3 L185.4 345.3 V335.1Z M185.4 335.1 L193.6 339.2 L201.9 335.1 M193.6 339.2 V349.3"/>
 </g>
</svg>


<!-- 3D model -->
<svg class="a" style="left:376px;top:161px" width="1544" height="804" viewBox="376 161 1544 804">
 <line x1="376" y1="208.7" x2="779" y2="161" stroke="#f3a3a3" stroke-width="1"/>
 <line x1="1300" y1="161.3" x2="1920" y2="269.5" stroke="#a6dba6" stroke-width="1"/>
 <!-- piles -->
 <g fill="#878787">
  <rect x="941" y="836" width="65" height="130"/>
  <rect x="1092" y="818" width="65" height="148"/>
  <rect x="1066" y="858" width="65" height="108"/>
  <rect x="1217" y="841" width="65" height="125"/>
 </g>
 <rect x="1092" y="858" width="39" height="108" fill="#626262"/>
 <g stroke="#5c5c5c" stroke-width="1" fill="none" stroke-opacity="0.75">
  <path d="M941.5 836 V965 M1005.5 836 V965 M949 840 V965"/>
  <path d="M1066.5 858 V965 M1130.5 858 V965 M1074 862 V965"/>
  <path d="M1092.5 818 V965 M1156.5 818 V965"/>
  <path d="M1217.5 841 V965 M1281.5 841 V965 M1225 845 V965"/>
 </g>
 <!-- footing -->
 <polygon points="878,841 1133,810 1345,847 1090,874" fill="#8c8c8c"/>
 <polygon points="882,723 1089,759.7 1089.5,815.4 882,841" fill="#6e6e6e"/>
 <polygon points="1089,759.7 1341.2,729.6 1343.6,846.5 1133,810 1089.5,815.4" fill="#777"/>
 <defs><linearGradient id="ftop" x1="0" y1="0" x2="0" y2="1"><stop offset="0" stop-color="#8e8e8e"/><stop offset="1" stop-color="#9c9c9c"/></linearGradient></defs>
 <polygon points="882,723 1134.7,693.3 1341.2,729.6 1089,759.7" fill="url(#ftop)"/>
 <polygon points="878,840.5 1090,874 1345,846.5 1345,850.5 1090,878.5 878,844.5" fill="#8a8a8a"/>
 <!-- pile outlines inside footing -->
 <g stroke="#666" stroke-width="0.9" fill="none" stroke-opacity="0.7">
  <path d="M941.5 836 V857 M1005.5 836 V866 M949 840 V858"/>
  <path d="M1066.5 858 V875 M1130.5 858 V874 M1074 862 V876"/>
  <path d="M1092.5 818 V876 M1156.5 818 V868"/>
  <path d="M1217.5 841 V861 M1281.5 841 V855 M1225 845 V860"/>
 </g>
 <g fill="#8f8f8f" fill-opacity="0.5" stroke="#6a6a6a" stroke-width="0.9" stroke-opacity="0.7">
  <ellipse cx="973.5" cy="836" rx="32" ry="6"/>
  <ellipse cx="1124.5" cy="818" rx="32" ry="6"/>
  <ellipse cx="1098.5" cy="858" rx="32" ry="6"/>
  <ellipse cx="1249.5" cy="841" rx="32" ry="6"/>
 </g>
 <g fill="none" stroke="#505050" stroke-width="1.25" stroke-opacity="0.9" stroke-linejoin="round">
  <polygon points="882,723 1134.7,693.3 1341.2,729.6 1089,759.7"/>
  <path d="M882 723 V841 M1089 759.7 L1090 874 M1341.2 729.6 L1344 847 M1134.7 693.3 V810"/>
  <path d="M878 840.5 L1090 874 L1345 846.5 M878 844.5 L1090 878.5 L1345 850.5 M878 840.5 V844.5 M1345 846.5 V850.5"/>
  <path d="M880 840.5 L1133 809.5 L1344 846.5 M880 844.5 L1133 813.5 L1344 850.5" stroke-opacity="0.6"/>
 </g>
 <g fill="#2c3a78"><circle cx="974" cy="834.5" r="3"/><circle cx="1124.3" cy="816.7" r="3"/><circle cx="1098.4" cy="856.5" r="3"/><circle cx="1248.8" cy="838.8" r="3"/></g>
 <!-- column -->
 <rect x="1072" y="342" width="79" height="385" fill="#7b7b7b"/>
 <rect x="1072" y="342" width="9" height="385" fill="#707070"/>
 <rect x="1072" y="693" width="79" height="38" fill="#6a6a6a"/>
 <ellipse cx="1111.5" cy="726" rx="39.5" ry="6.5" fill="#8a8a8a" stroke="#5a5a5a" stroke-width="0.9"/>
 <line x1="1134.7" y1="693.3" x2="1134.7" y2="732" stroke="#505050" stroke-width="1" stroke-opacity="0.7"/>
 <g stroke="#5a5a5a" stroke-width="1" fill="none" stroke-opacity="0.85">
  <line x1="1072.5" y1="342" x2="1072.5" y2="726"/><line x1="1150.5" y1="342" x2="1150.5" y2="726"/><line x1="1081" y1="347" x2="1081" y2="730"/>
 </g>
 <!-- cap -->
 <polygon points="916.4,269.7 1102.9,328 1180.5,342.7 1306.9,347.8 1306.9,358.2 1114.9,351.1 1037.3,336.4 850.8,278" fill="#8b8b8b"/>
 <polygon points="916.4,212.1 1306.9,281.1 1306.9,347.8 1180.5,342.7 1102.9,328 916.4,269.7" fill="#707070"/>
 <polygon points="850.8,200.5 916.4,212.1 916.4,269.7 850.8,278" fill="#767676"/>
 <polygon points="850.8,200.5 916.4,192.1 1372.5,272.7 1306.9,281.1" fill="#8d8d8d"/>
 <polygon points="1306.9,281.1 1372.5,272.7 1372.5,350.5 1306.9,347.8" fill="#7b7b7b"/>
 <polygon points="1306.9,347.8 1372.5,350.5 1306.9,358.2" fill="#888"/>
 <ellipse cx="1111" cy="342.4" rx="39" ry="8.3" fill="#7a7a7a" stroke="#5a5a5a" stroke-width="0.9" stroke-opacity="0.8"/>
 <g fill="none" stroke="#505050" stroke-width="1.25" stroke-opacity="0.9" stroke-linejoin="round">
  <path d="M850.8 200.5 L916.4 192.1 L1372.5 272.7 L1306.9 281.1 L850.8 200.5"/>
  <path d="M850.8 200.5 L850.8 278 L916.4 269.7 L916.4 192.1 M1306.9 281.1 L1306.9 358.2 M1372.5 272.7 L1372.5 350.5"/>
  <path d="M850.8 278 L1037.3 336.4 L1114.9 351.1 L1306.9 358.2 L1372.5 350.5 L1180.5 342.7 L1102.9 328 L916.4 269.7"/>
  <path d="M1037.3 336.4 L1102.9 328 M1150.7 347.8 L1180.5 342.7"/>
 </g>
 <!-- bearings -->
 <g id="brg1"><polygon points="931.6,198.3 886.7,204.0 886.7,205.8 917.0,211.2 961.9,205.4 961.9,203.6" fill="#a4a4a4" stroke="#5e5e5e" stroke-width="0.9" stroke-linejoin="round"/><polygon points="886.7,204.0 917.0,209.4 961.9,203.6 931.6,198.3" fill="#999"/><path d="M886.7 204.0 L917.0 209.4 L961.9 203.6" stroke="#6a6a6a" stroke-width="0.7" fill="none"/><polygon points="897.0,200.3 917.7,204.0 952.7,199.5 952.7,201.5 917.7,206.0 897.0,202.3" fill="#9c1015" stroke="#5e0a0d" stroke-width="0.6"/><polygon points="897.0,200.3 917.7,204.0 952.7,199.5 932.0,195.8" fill="#b81418" stroke="#5e0a0d" stroke-width="0.6"/><polygon points="904.1,195.2 919.6,197.9 946.6,194.5 946.6,200.0 919.6,203.4 904.1,200.7" fill="#1a7252" stroke="#0f4533" stroke-width="0.6"/><polygon points="904.1,195.2 919.6,197.9 946.6,194.5 931.1,191.7" fill="#1e7a57" stroke="#0f4533" stroke-width="0.6"/><polygon points="896.2,191.3 916.9,195.0 952.3,190.4 952.3,192.4 916.9,197.0 896.2,193.3" fill="#b0121a" stroke="#7a0c10" stroke-width="0.6"/><polygon points="896.2,191.3 916.9,195.0 952.3,190.4 931.6,186.8" fill="#f41212" stroke="#7a0c10" stroke-width="0.6"/></g>
 <g transform="translate(125.1 22.4)"><polygon points="931.6,198.3 886.7,204.0 886.7,205.8 917.0,211.2 961.9,205.4 961.9,203.6" fill="#a4a4a4" stroke="#5e5e5e" stroke-width="0.9" stroke-linejoin="round"/><polygon points="886.7,204.0 917.0,209.4 961.9,203.6 931.6,198.3" fill="#999"/><path d="M886.7 204.0 L917.0 209.4 L961.9 203.6" stroke="#6a6a6a" stroke-width="0.7" fill="none"/><polygon points="897.0,200.3 917.7,204.0 952.7,199.5 952.7,201.5 917.7,206.0 897.0,202.3" fill="#9c1015" stroke="#5e0a0d" stroke-width="0.6"/><polygon points="897.0,200.3 917.7,204.0 952.7,199.5 932.0,195.8" fill="#b81418" stroke="#5e0a0d" stroke-width="0.6"/><polygon points="904.1,195.2 919.6,197.9 946.6,194.5 946.6,200.0 919.6,203.4 904.1,200.7" fill="#1a7252" stroke="#0f4533" stroke-width="0.6"/><polygon points="904.1,195.2 919.6,197.9 946.6,194.5 931.1,191.7" fill="#1e7a57" stroke="#0f4533" stroke-width="0.6"/><polygon points="896.2,191.3 916.9,195.0 952.3,190.4 952.3,192.4 916.9,197.0 896.2,193.3" fill="#b0121a" stroke="#7a0c10" stroke-width="0.6"/><polygon points="896.2,191.3 916.9,195.0 952.3,190.4 931.6,186.8" fill="#f41212" stroke="#7a0c10" stroke-width="0.6"/></g>
 <g transform="translate(250.4 44.6)"><polygon points="931.6,198.3 886.7,204.0 886.7,205.8 917.0,211.2 961.9,205.4 961.9,203.6" fill="#a4a4a4" stroke="#5e5e5e" stroke-width="0.9" stroke-linejoin="round"/><polygon points="886.7,204.0 917.0,209.4 961.9,203.6 931.6,198.3" fill="#999"/><path d="M886.7 204.0 L917.0 209.4 L961.9 203.6" stroke="#6a6a6a" stroke-width="0.7" fill="none"/><polygon points="897.0,200.3 917.7,204.0 952.7,199.5 952.7,201.5 917.7,206.0 897.0,202.3" fill="#9c1015" stroke="#5e0a0d" stroke-width="0.6"/><polygon points="897.0,200.3 917.7,204.0 952.7,199.5 932.0,195.8" fill="#b81418" stroke="#5e0a0d" stroke-width="0.6"/><polygon points="904.1,195.2 919.6,197.9 946.6,194.5 946.6,200.0 919.6,203.4 904.1,200.7" fill="#1a7252" stroke="#0f4533" stroke-width="0.6"/><polygon points="904.1,195.2 919.6,197.9 946.6,194.5 931.1,191.7" fill="#1e7a57" stroke="#0f4533" stroke-width="0.6"/><polygon points="896.2,191.3 916.9,195.0 952.3,190.4 952.3,192.4 916.9,197.0 896.2,193.3" fill="#b0121a" stroke="#7a0c10" stroke-width="0.6"/><polygon points="896.2,191.3 916.9,195.0 952.3,190.4 931.6,186.8" fill="#f41212" stroke="#7a0c10" stroke-width="0.6"/></g>
 <g transform="translate(374 65.9)"><polygon points="931.6,198.3 886.7,204.0 886.7,205.8 917.0,211.2 961.9,205.4 961.9,203.6" fill="#a4a4a4" stroke="#5e5e5e" stroke-width="0.9" stroke-linejoin="round"/><polygon points="886.7,204.0 917.0,209.4 961.9,203.6 931.6,198.3" fill="#999"/><path d="M886.7 204.0 L917.0 209.4 L961.9 203.6" stroke="#6a6a6a" stroke-width="0.7" fill="none"/><polygon points="897.0,200.3 917.7,204.0 952.7,199.5 952.7,201.5 917.7,206.0 897.0,202.3" fill="#9c1015" stroke="#5e0a0d" stroke-width="0.6"/><polygon points="897.0,200.3 917.7,204.0 952.7,199.5 932.0,195.8" fill="#b81418" stroke="#5e0a0d" stroke-width="0.6"/><polygon points="904.1,195.2 919.6,197.9 946.6,194.5 946.6,200.0 919.6,203.4 904.1,200.7" fill="#1a7252" stroke="#0f4533" stroke-width="0.6"/><polygon points="904.1,195.2 919.6,197.9 946.6,194.5 931.1,191.7" fill="#1e7a57" stroke="#0f4533" stroke-width="0.6"/><polygon points="896.2,191.3 916.9,195.0 952.3,190.4 952.3,192.4 916.9,197.0 896.2,193.3" fill="#b0121a" stroke="#7a0c10" stroke-width="0.6"/><polygon points="896.2,191.3 916.9,195.0 952.3,190.4 931.6,186.8" fill="#f41212" stroke="#7a0c10" stroke-width="0.6"/></g>
 <!-- blue axis -->
 <line x1="1089" y1="161" x2="1089" y2="965" stroke="#5fa3c6" stroke-width="0.9"/>
</svg>


<!-- viewport toolbar -->
<div class="a" style="left:1528px;top:138px;width:20px;height:20px;background:#2a3140;border-radius:2px"></div>
<div class="a" style="left:1551px;top:138px;width:58px;height:20px;background:#2a3140;border-radius:2px"></div>
<div class="a" style="left:1552px;top:138px;width:18px;height:20px;background:#1c84c6"></div>
<div class="a" style="left:1621px;top:138px;width:77px;height:20px;background:#2a3140;border-radius:2px"></div>
<div class="a" style="left:1622px;top:138px;width:18px;height:20px;background:#1c84c6"></div>
<div class="a" style="left:1710px;top:138px;width:118px;height:20px;background:#1a7fc4;border:1px solid #3aa0e8;border-radius:3px"></div>
<div class="t" style="left:1751px;top:141px;font-size:12.5px;color:#fff">Select</div>
<div class="a" style="left:1832px;top:138px;width:20px;height:20px;background:#2a3140;border-radius:2px"></div>
<div class="a" style="left:1856px;top:138px;width:20px;height:20px;background:#2a3140;border-radius:2px"></div>
<div class="a" style="left:1879px;top:138px;width:20px;height:20px;background:#1c84c6"></div>
<svg class="a" style="left:1520px;top:136px" width="400" height="25" viewBox="1520 136 400 25">
 <g fill="none" stroke="#a0a0a0" stroke-width="1">
  <path d="M1543 143.5 A6.8 6.8 0 1 0 1545 150"/><path d="M1531.5 147 Q1538 152 1545 149"/><path d="M1538 141.5 Q1533 148 1537.5 155"/>
 </g>
 <rect x="1541.5" y="139.5" width="6" height="7.5" fill="#2a3140"/>
 <text x="1544.5" y="146" font-size="6.5" font-weight="700" fill="#e0e0e0" text-anchor="middle" font-family="Liberation Sans">A</text>
 <circle cx="1561" cy="148" r="7.6" fill="#bdbdbd" stroke="#fff" stroke-width="1.3"/>
 <path d="M1553.8 149.5 Q1561 154 1568.2 147.5 M1559 140.8 Q1555 148 1560.5 155.3" stroke="#fff" stroke-width="1" fill="none"/>
 <circle cx="1580" cy="148" r="8" fill="#c4c4c6"/>
 <g fill="none" stroke="#c8c8c8" stroke-width="1">
  <circle cx="1599" cy="148" r="7.5"/><path d="M1591.5 149.5 Q1599 154 1606.5 147.5 M1597 140.6 Q1593 148 1598.5 155.4"/>
 </g>
 <g fill="none" stroke="#fff" stroke-width="1.4" stroke-dasharray="1.8 1.5">
  <rect x="1624.5" y="141.5" width="12.5" height="13"/>
  <circle cx="1650" cy="148" r="6.6"/>
  <path d="M1662.5 141.5 H1675 L1670 148 L1675 154.5 H1662.5Z"/>
  <path d="M1681.5 154.5 Q1684 142 1687 142 Q1690 142 1688 151 Q1687 154 1690 153 Q1694 150 1694.5 141"/>
 </g>
 <path d="M1716 141 V152 L1718.8 149.3 L1721 154 L1722.6 153.2 L1720.5 148.6 H1724Z" fill="#fff"/>
 <circle cx="1842" cy="148" r="6.3" fill="none" stroke="#fff" stroke-width="1.2"/>
 <text x="1842" y="151.5" font-size="9" font-weight="700" fill="#fff" text-anchor="middle" font-family="Liberation Sans">L</text>
 <circle cx="1866" cy="148" r="6.3" fill="none" stroke="#fff" stroke-width="1.2"/>
 <text x="1866" y="151.5" font-size="9" font-weight="700" fill="#fff" text-anchor="middle" font-family="Liberation Sans">G</text>
 <path d="M1883 145 L1889 142 L1895 145 V152 L1889 155 L1883 152Z" fill="#9c9c9c"/>
 <path d="M1883 145 L1889 148 L1895 145 M1889 148 V155" stroke="#6f6f6f" stroke-width="0.8" fill="none"/>
 <path d="M1889 148 L1889 156 L1891 154 L1893 157 L1894 156.4 L1892.4 153.5 H1895Z" fill="#f5a623"/>
</svg>
<!-- bottom tabs -->
<div class="a" style="left:376px;top:965px;width:22px;height:18px;background:#1e2128"></div>
<div class="a" style="left:398px;top:965px;width:120px;height:18px;background:#2e313a"></div>
<div class="t" style="left:414px;top:968px;font-size:13px;letter-spacing:0.1px;color:#e6e6e6">Start Page</div>
<div class="t" style="left:503px;top:967px;font-size:13px;color:#e6e6e6">&#x2715;</div>
<div class="a" style="left:518px;top:965px;width:408px;height:18px;background:#fff"></div>
<div class="t" style="left:527px;top:968px;font-size:13px;letter-spacing:0.29px;color:#111">Africa webinar- RC T beam-Updated Rebar modelling-R1.cimz</div>
<div class="t" style="left:910px;top:967px;font-size:13px;color:#222">&#x2715;</div>
<!-- view cube -->
<svg class="a" style="left:1830px;top:880px" width="80" height="80" viewBox="1830 880 80 80">
 <path d="M1842 895 L1865 892 L1897 895 V935 L1867 938 L1842 934Z" fill="#cfcfcf"/>
 <path d="M1842 894 L1866 892 L1897 894" stroke="#e6e6e6" stroke-width="1.5" fill="none"/>
 <rect x="1864.5" y="899" width="3.6" height="37" fill="#6eb4d8"/>
 <path d="M1842 934 L1866 938" stroke="#6fcf70" stroke-width="2.5"/>
 <path d="M1868 938 L1897 934" stroke="#ef8c8c" stroke-width="2.5"/>
 <circle cx="1867" cy="938.5" r="5.3" fill="#27313f"/>
 <text transform="translate(1854.4 926.3) scale(0.78 1.2)" font-size="19" fill="#363c4c" stroke="#363c4c" stroke-width="0.7" text-anchor="middle" font-family="Liberation Sans">S</text>
 <text transform="translate(1882.8 926.3) scale(0.78 1.2)" font-size="19" fill="#363c4c" stroke="#363c4c" stroke-width="0.7" text-anchor="middle" font-family="Liberation Sans">F</text>
 <path d="M1862 893.5 H1867 M1868 895 H1873" stroke="#3a3f4a" stroke-width="1"/>
</svg>

<!-- menu -->
<div class="t" style="left:44px;top:35px;font-size:13px;color:#e6e6e6">Base</div>
<div class="t" style="left:134px;top:35px;font-size:13px;letter-spacing:0.5px;color:#e6e6e6">Model</div>
<div class="t" style="left:233px;top:35px;font-size:13px;color:#e6e6e6">Feature</div>
<div class="t" style="left:341px;top:35px;font-size:13px;color:#e6e6e6">Edit</div>
<div class="t" style="left:426px;top:35px;font-size:13px;font-weight:700;color:#fff">Application</div>
<div class="t" style="left:560px;top:35px;font-size:13px;color:#e6e6e6">Lab</div>
<div class="a" style="left:408px;top:51px;width:108px;height:2px;background:#3f93ee"></div>

</body></html>
